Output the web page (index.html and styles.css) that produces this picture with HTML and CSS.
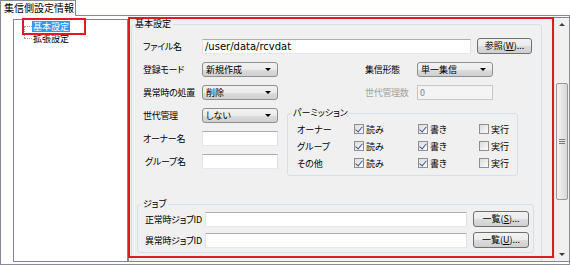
FILE: index.html
```html
<!DOCTYPE html>
<html lang="ja">
<head>
<meta charset="utf-8">
<title>集信側設定情報</title>
<link rel="stylesheet" href="styles.css">
</head>
<body>
<div class="window">
  <div class="tabstrip">
    <div class="tab">集信側設定情報</div>
  </div>
  <div class="tabpage">
    <div class="tree">
      <div class="tree-item first"><span class="branch"></span><span class="node selected">基本設定</span></div>
      <div class="tree-item last"><span class="branch"></span><span class="node">拡張設定</span></div>
    </div>
    <div class="pane">
      <div class="pane-view">
        <fieldset class="group basic">
          <legend>基本設定</legend>
          <div class="row">
            <span class="lbl">ファイル名</span>
            <span class="input wide">/user/data/rcvdat</span>
            <span class="btn btn-ref">参照(<u>W</u>)...</span>
          </div>
          <div class="row">
            <span class="lbl">登録モード</span>
            <span class="select">新規作成</span>
            <span class="lbl lbl-right">集信形態</span>
            <span class="select">単一集信</span>
          </div>
          <div class="row">
            <span class="lbl">異常時の処置</span>
            <span class="select">削除</span>
            <span class="lbl lbl-right disabled">世代管理数</span>
            <span class="input small disabled">0</span>
          </div>
          <div class="lower">
            <div class="col">
              <div class="row">
                <span class="lbl">世代管理</span>
                <span class="select">しない</span>
              </div>
              <div class="row">
                <span class="lbl">オーナー名</span>
                <span class="input small"></span>
              </div>
              <div class="row">
                <span class="lbl lbl-indent">グループ名</span>
                <span class="input small"></span>
              </div>
            </div>
            <fieldset class="group perm">
              <legend>パーミッション</legend>
              <div class="perm-row">
                <span class="perm-lbl">オーナー</span>
                <span class="chk"><span class="box on"></span>読み</span>
                <span class="chk"><span class="box on"></span>書き</span>
                <span class="chk"><span class="box"></span>実行</span>
              </div>
              <div class="perm-row">
                <span class="perm-lbl">グループ</span>
                <span class="chk"><span class="box on"></span>読み</span>
                <span class="chk"><span class="box on"></span>書き</span>
                <span class="chk"><span class="box"></span>実行</span>
              </div>
              <div class="perm-row">
                <span class="perm-lbl">その他</span>
                <span class="chk"><span class="box on"></span>読み</span>
                <span class="chk"><span class="box on"></span>書き</span>
                <span class="chk"><span class="box"></span>実行</span>
              </div>
            </fieldset>
          </div>
          <fieldset class="group job">
            <legend>ジョブ</legend>
            <div class="row job-row">
              <span class="lbl job-lbl">正常時ジョブID</span>
              <span class="input job-input"></span>
              <span class="btn btn-list">一覧(<u>S</u>)...</span>
            </div>
            <div class="row job-row">
              <span class="lbl job-lbl">異常時ジョブID</span>
              <span class="input job-input"></span>
              <span class="btn btn-list">一覧(<u>U</u>)...</span>
            </div>
          </fieldset>
        </fieldset>
      </div>
      <div class="scrollbar">
        <div class="sb-arrow sb-up"></div>
        <div class="sb-track">
          <div class="sb-thumb"><span class="grip"></span></div>
        </div>
        <div class="sb-arrow sb-down"></div>
      </div>
    </div>
    <div class="mark mark-tree"></div>
    <div class="mark mark-pane"></div>
  </div>
</div>
</body>
</html>
```

FILE: styles.css
```css
* { box-sizing: border-box; }
html, body { margin: 0; padding: 0; }
body {
  width: 570px;
  height: 265px;
  overflow: hidden;
  background: #ffffff;
  font-family: "Noto Sans CJK JP", "Noto Sans", sans-serif;
  font-size: 9px;
  font-feature-settings: "palt";
  color: #000;
}
.window { position: relative; width: 570px; height: 265px; }

.tabstrip { height: 15px; display: flex; align-items: flex-end; }
.tab {
  position: relative;
  z-index: 1;
  width: 76px;
  height: 16px;
  margin-bottom: -1px;
  padding: 0 0 0 3px;
  border: 1px solid #898c95;
  border-bottom: none;
  background: #ffffff;
  line-height: 14px;
  font-size: 10px;
  white-space: nowrap;
}

.tabpage {
  height: 250px;
  border: 1px solid #898c95;
  background: #ffffff;
  display: flex;
  align-items: flex-start;
  padding: 1px 0 2px 12px;
}

/* tree */
.tree {
  width: 115px;
  height: 243px;
  margin-top: 2px;
  border: 1px solid #828790;
  background: #fff;
  padding: 0 0 0 10px;
  font-size: 9px;
}
.tree-item {
  position: relative;
  height: 12px;
  line-height: 11px;
  display: flex;
  align-items: center;
}
.tree-item.first { margin-top: 0; }
.branch {
  width: 8px;
  height: 1px;
  border-top: 1px dotted #a0a0a0;
}
.tree-item.last::before {
  content: "";
  position: absolute;
  left: 0;
  top: -6px;
  height: 12px;
  border-left: 1px dotted #a0a0a0;
}
.node { padding: 0 1px; white-space: nowrap; }
.node.selected { background: #3399ff; color: #fff; }

/* right pane */
.pane {
  flex: 1;
  height: 245px;
  display: flex;
  border: 1px solid #828790;
  border-right: none;
  background: #f0f0f0;
}
.pane-view {
  flex: 1;
  overflow: hidden;
  padding-left: 2px;
}

.group {
  margin: 0;
  border: 1px solid #d5dfe5;
  border-radius: 3px;
  min-width: 0;
}
.group > legend {
  line-height: 12px;
  padding: 0 2px;
}
.basic {
  width: 411px;
  height: 260px;
  padding: 8px 0 0 11px;
}
.basic > legend { margin-left: -10px; }

.row {
  display: flex;
  align-items: center;
  height: 16px;
  margin-bottom: 7px;
}
.lbl { width: 59px; flex: none; white-space: nowrap; letter-spacing: -0.3px; }
.lbl-right { width: 52px; margin-left: 87px; }
.lbl-indent { padding-left: 2px; }
.disabled { color: #a0a0a0; }

.input {
  display: block;
  flex: none;
  height: 15px;
  line-height: 13px;
  padding: 0 2px;
  background: #fff;
  border: 1px solid;
  border-color: #abadb3 #dbdfe6 #e3e9ef #e2e3ea;
  white-space: nowrap;
}
.input.wide { width: 269px; font-family: "DejaVu Sans", sans-serif; font-size: 10px; }
.input.small { width: 76px; }
.input.disabled { background: #f4f4f4; border-color: #c7c7c7; color: #8a8a8a; }

.select {
  position: relative;
  flex: none;
  display: block;
  width: 76px;
  height: 15px;
  line-height: 13px;
  padding: 0 3px;
  border: 1px solid #8e8f8f;
  border-radius: 3px;
  background: linear-gradient(#f2f2f2 0%, #ebebeb 50%, #dddddd 51%, #cfcfcf 100%);
}
.select::after {
  content: "";
  position: absolute;
  right: 6px;
  top: 5px;
  border-left: 3px solid transparent;
  border-right: 3px solid transparent;
  border-top: 3px solid #000;
}

.btn {
  flex: none;
  display: block;
  height: 16px;
  line-height: 14px;
  text-align: center;
  border: 1px solid #707070;
  border-radius: 3px;
  background: linear-gradient(#f2f2f2 0%, #ebebeb 50%, #dddddd 51%, #cfcfcf 100%);
  white-space: nowrap;
}
.btn-ref { width: 55px; margin-left: 6px; }
.btn-list { width: 56px; margin-left: 6px; }

.lower { display: flex; align-items: flex-start; height: 71px; }
.col { width: 135px; flex: none; }

.perm {
  width: 231px;
  margin-left: 9px;
  padding: 3px 0 5px 9px;
}
.perm > legend { margin-left: -5px; padding: 0 1px; }
.perm-row {
  display: grid;
  grid-template-columns: 57px 64px 61px auto;
  align-items: center;
  height: 14px;
  margin-bottom: 3px;
}
.perm-row:last-child { margin-bottom: 0; }
.chk { display: flex; align-items: center; white-space: nowrap; }
.box {
  width: 10px;
  height: 10px;
  margin-right: 2px;
  border: 1px solid #8f8f8f;
  background: linear-gradient(135deg, #dcdcdc, #fbfbfb);
  position: relative;
}
.box.on::after {
  content: "";
  position: absolute;
  left: 2px;
  top: 0px;
  width: 3px;
  height: 6px;
  border-right: 1.5px solid #3c5a9a;
  border-bottom: 1.5px solid #3c5a9a;
  transform: rotate(40deg);
}

.job {
  width: 397px;
  margin: 20px 0 0 -6px;
  padding: 1px 0 4px 7px;
}
.job > legend { margin-left: -4px; }
.job-row { margin-bottom: 5px; }
.job-row:last-child { margin-bottom: 0; }
.job-lbl { width: 60px; }
.input.job-input { width: 262px; }

/* scrollbar */
.scrollbar {
  width: 15px;
  flex: none;
  display: flex;
  flex-direction: column;
  background: #f0f0f0;
  border-left: 1px solid #e6e6e6;
}
.sb-arrow { height: 15px; position: relative; }
.sb-arrow::after {
  content: "";
  position: absolute;
  left: 4px;
  border-left: 3px solid transparent;
  border-right: 3px solid transparent;
}
.sb-up::after { top: 5px; border-bottom: 3px solid #3c3c3c; }
.sb-down::after { top: 7px; border-top: 3px solid #3c3c3c; }
.sb-track { flex: 1; padding-top: 50px; }
.sb-thumb {
  width: 12px;
  margin-left: 1px;
  height: 117px;
  border: 1px solid #979797;
  border-radius: 2px;
  background: linear-gradient(90deg, #f3f3f3, #e6e6e6 50%, #d6d6d6);
  display: flex;
  align-items: center;
  justify-content: center;
}
.grip {
  width: 6px;
  height: 5px;
  border-top: 1px solid #7a7a7a;
  border-bottom: 1px solid #7a7a7a;
  position: relative;
}
.grip::after {
  content: "";
  position: absolute;
  left: 0;
  right: 0;
  top: 1px;
  border-top: 1px solid #7a7a7a;
}

/* red annotation boxes */
.mark {
  position: absolute;
  border: 2px solid #dc1c22;
  pointer-events: none;
}
.mark-tree { left: 22px; top: 18px; width: 64px; height: 17px; }
.mark-pane { left: 128px; top: 17px; width: 426px; height: 241px; }
```
